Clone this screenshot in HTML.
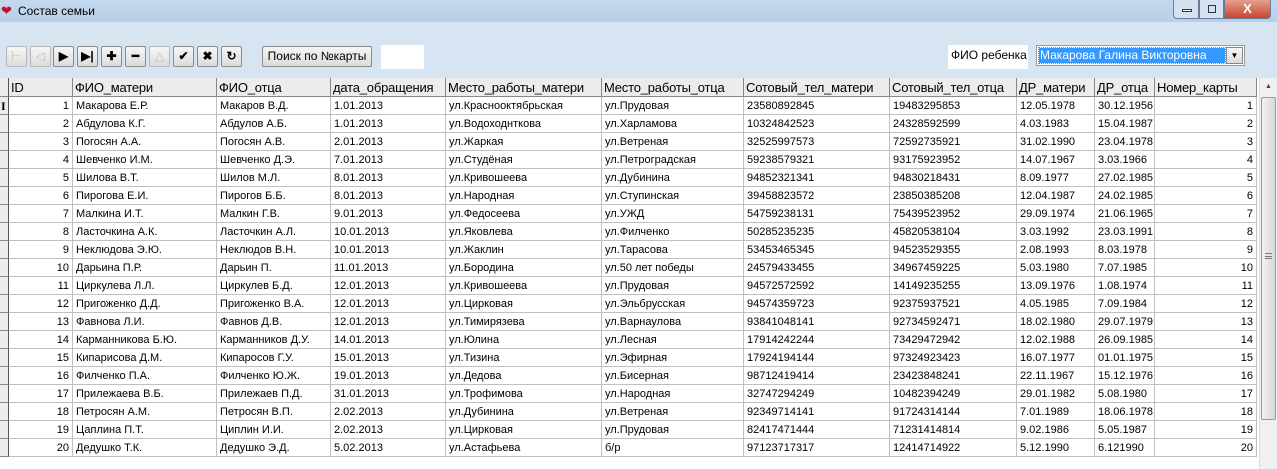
<!DOCTYPE html>
<html><head><meta charset="utf-8"><style>
*{margin:0;padding:0;box-sizing:border-box}
body{width:1277px;height:469px;overflow:hidden;background:#fff;font-family:"Liberation Sans",sans-serif;font-size:11px;position:relative}
.title{position:absolute;left:0;top:0;width:1277px;height:22px;background:linear-gradient(#c5d9ee,#b7cfea);}
.title .tt{position:absolute;left:18px;top:4px;font-size:12px;color:#000}
.title .heart{position:absolute;left:1px;top:3px;color:#c0102a;font-size:13px}
.wb{position:absolute;top:0;height:19px;border:1px solid #6b7d95;border-top:none}
.tool{position:absolute;left:0;top:22px;width:1277px;height:56px;background:#d7e4f2}
.btn{position:absolute;top:46px;width:21px;height:21px;border:1px solid #8a8a8a;border-radius:2px;background:linear-gradient(#f6f6f6,#dcdcdc);font-size:12px;text-align:center;line-height:19px;font-weight:bold}
.dis{color:#c0c0c0;border-color:#b8b8b8;font-weight:normal}
.grid{position:absolute;left:0;top:78px;width:1259px}
.row{position:absolute;left:0;height:18px;width:1257px}
.c{position:absolute;top:0;height:18px;border-right:1px solid #c0c0c0;border-bottom:1px solid #c0c0c0;padding:0 3px;line-height:18px;white-space:nowrap;overflow:hidden;font-size:11px}
.h .c{height:19px;background:#ececec;border-right:1px solid #888;border-bottom:1px solid #888;font-size:13px;line-height:19px;padding-left:2px;letter-spacing:-0.2px}
.ind{background:#ececec !important;border-right:1px solid #555 !important;border-bottom:1px solid #888 !important}
.r{text-align:right}
</style></head><body>
<div class="title"><span class="heart">❤</span><span class="tt">Состав семьи</span>
<div class="wb" style="left:1173px;width:26px;background:#d3e1f1;border-bottom-left-radius:4px"><div style="position:absolute;left:8px;top:9px;width:10px;height:3px;border:1px solid #333;background:#fff"></div></div>
<div class="wb" style="left:1199px;width:25px;background:#d3e1f1"><div style="position:absolute;left:8px;top:5px;width:8px;height:8px;border:1px solid #333"></div></div>
<div class="wb" style="left:1224px;width:47px;background:linear-gradient(#e8a08e,#c7452c);border-bottom-right-radius:4px;color:#fff;font-weight:bold;text-align:center;font-size:13px;line-height:17px">X</div>
</div>
<div class="tool"></div>
<div class="btn dis" style="left:6px">⊢</div>
<div class="btn dis" style="left:30px">◁</div>
<div class="btn" style="left:53px">▶</div>
<div class="btn" style="left:77px">▶|</div>
<div class="btn" style="left:101px">✚</div>
<div class="btn" style="left:125px">━</div>
<div class="btn dis" style="left:149px">△</div>
<div class="btn" style="left:173px">✔</div>
<div class="btn" style="left:197px">✖</div>
<div class="btn" style="left:221px">↻</div>
<div class="btn" style="left:262px;width:110px;font-weight:normal;font-size:12px">Поиск по №карты</div>
<div style="position:absolute;left:381px;top:45px;width:43px;height:24px;background:#fff"></div>
<div style="position:absolute;left:948px;top:45px;width:80px;height:24px;background:#fff;font-size:12px;line-height:20px;padding-left:3px;white-space:nowrap">ФИО ребенка</div>
<div style="position:absolute;left:1036px;top:45px;width:209px;height:21px;border:1px solid #999;background:#fff">
<div style="position:absolute;left:2px;top:2px;width:186px;height:15px;background:#3399ff;color:#fff;font-size:12px;line-height:15px;padding-left:1px;outline:1px dotted #c80;white-space:nowrap">Макарова Галина Викторовна</div>
<div style="position:absolute;right:1px;top:1px;width:17px;height:17px;border:1px solid #888;background:linear-gradient(#f6f6f6,#dcdcdc);text-align:center;font-size:8px;line-height:16px">▼</div></div>
<div class="grid" id="g"></div>
<div style="position:absolute;left:1259px;top:78px;width:18px;height:391px;background:#f0f0f0;border-left:1px solid #ddd">
<div style="position:absolute;left:0;top:0;width:17px;height:17px;text-align:center;font-size:7px;line-height:17px;color:#444">▲</div>
<div style="position:absolute;left:1px;top:19px;width:15px;height:323px;border:1px solid #999;border-radius:2px;background:linear-gradient(90deg,#f2f2f2,#d8d8d8)"><div style="position:absolute;left:3px;top:155px;width:7px;height:6px;border-top:1px solid #777;border-bottom:1px solid #777"></div><div style="position:absolute;left:3px;top:158px;width:7px;border-top:1px solid #777"></div></div>
</div>
<script>
var X=[0,9,73,217,331,446,602,744,890,1017,1095,1155,1257];
var H=["","ID","ФИО_матери","ФИО_отца","дата_обращения","Место_работы_матери","Место_работы_отца","Сотовый_тел_матери","Сотовый_тел_отца","ДР_матери","ДР_отца","Номер_карты"];
var D=`Макарова Е.Р.|Макаров В.Д.|1.01.2013|ул.Краснооктябрьская|ул.Прудовая|23580892845|19483295853|12.05.1978|30.12.1956
Абдулова К.Г.|Абдулов А.Б.|1.01.2013|ул.Водоходнткова|ул.Харламова|10324842523|24328592599|4.03.1983|15.04.1987
Погосян А.А.|Погосян А.В.|2.01.2013|ул.Жаркая|ул.Ветреная|32525997573|72592735921|31.02.1990|23.04.1978
Шевченко И.М.|Шевченко Д.Э.|7.01.2013|ул.Студёная|ул.Петроградская|59238579321|93175923952|14.07.1967|3.03.1966
Шилова В.Т.|Шилов М.Л.|8.01.2013|ул.Кривошеева|ул.Дубинина|94852321341|94830218431|8.09.1977|27.02.1985
Пирогова Е.И.|Пирогов Б.Б.|8.01.2013|ул.Народная|ул.Ступинская|39458823572|23850385208|12.04.1987|24.02.1985
Малкина И.Т.|Малкин Г.В.|9.01.2013|ул.Федосеева|ул.УЖД|54759238131|75439523952|29.09.1974|21.06.1965
Ласточкина А.К.|Ласточкин А.Л.|10.01.2013|ул.Яковлева|ул.Филченко|50285235235|45820538104|3.03.1992|23.03.1991
Неклюдова Э.Ю.|Неклюдов В.Н.|10.01.2013|ул.Жаклин|ул.Тарасова|53453465345|94523529355|2.08.1993|8.03.1978
Дарьина П.Р.|Дарьин П.|11.01.2013|ул.Бородина|ул.50 лет победы|24579433455|34967459225|5.03.1980|7.07.1985
Циркулева Л.Л.|Циркулев Б.Д.|12.01.2013|ул.Кривошеева|ул.Прудовая|94572572592|14149235255|13.09.1976|1.08.1974
Пригоженко Д.Д.|Пригоженко В.А.|12.01.2013|ул.Цирковая|ул.Эльбрусская|94574359723|92375937521|4.05.1985|7.09.1984
Фавнова Л.И.|Фавнов Д.В.|12.01.2013|ул.Тимирязева|ул.Варнаулова|93841048141|92734592471|18.02.1980|29.07.1979
Карманникова Б.Ю.|Карманников Д.У.|14.01.2013|ул.Юлина|ул.Лесная|17914242244|73429472942|12.02.1988|26.09.1985
Кипарисова Д.М.|Кипаросов Г.У.|15.01.2013|ул.Тизина|ул.Эфирная|17924194144|97324923423|16.07.1977|01.01.1975
Филченко П.А.|Филченко Ю.Ж.|19.01.2013|ул.Дедова|ул.Бисерная|98712419414|23423848241|22.11.1967|15.12.1976
Прилежаева В.Б.|Прилежаев П.Д.|31.01.2013|ул.Трофимова|ул.Народная|32747294249|10482394249|29.01.1982|5.08.1980
Петросян А.М.|Петросян В.П.|2.02.2013|ул.Дубинина|ул.Ветреная|92349714141|91724314144|7.01.1989|18.06.1978
Цаплина П.Т.|Циплин И.И.|2.02.2013|ул.Цирковая|ул.Прудовая|82417471444|71231414814|9.02.1986|5.05.1987
Дедушко Т.К.|Дедушко Э.Д.|5.02.2013|ул.Астафьева|б/р|97123717317|12414714922|5.12.1990|6.121990`.split("\n");
var s='<div class="row h" style="top:0">';
for(var i=0;i<12;i++)s+='<div class="c'+(i==0?' ind':'')+'" style="left:'+X[i]+'px;width:'+(X[i+1]-X[i])+'px">'+H[i]+'</div>';
s+='</div>';
D.forEach(function(l,r){var f=[(r==0?'<b style="font-family:Liberation Serif;font-size:12px">I</b>':''),r+1].concat(l.split('|'));f.push(r+1);
s+='<div class="row" style="top:'+(19+r*18)+'px">';
for(var i=0;i<12;i++)s+='<div class="c'+(i==0?' ind':'')+((i==1||i==11)?' r':'')+'" style="left:'+X[i]+'px;width:'+(X[i+1]-X[i])+'px;'+(i==0?'padding:0 1px;':'')+'">'+f[i]+'</div>';
s+='</div>';});
document.getElementById('g').innerHTML=s;
</script>
</body></html>
